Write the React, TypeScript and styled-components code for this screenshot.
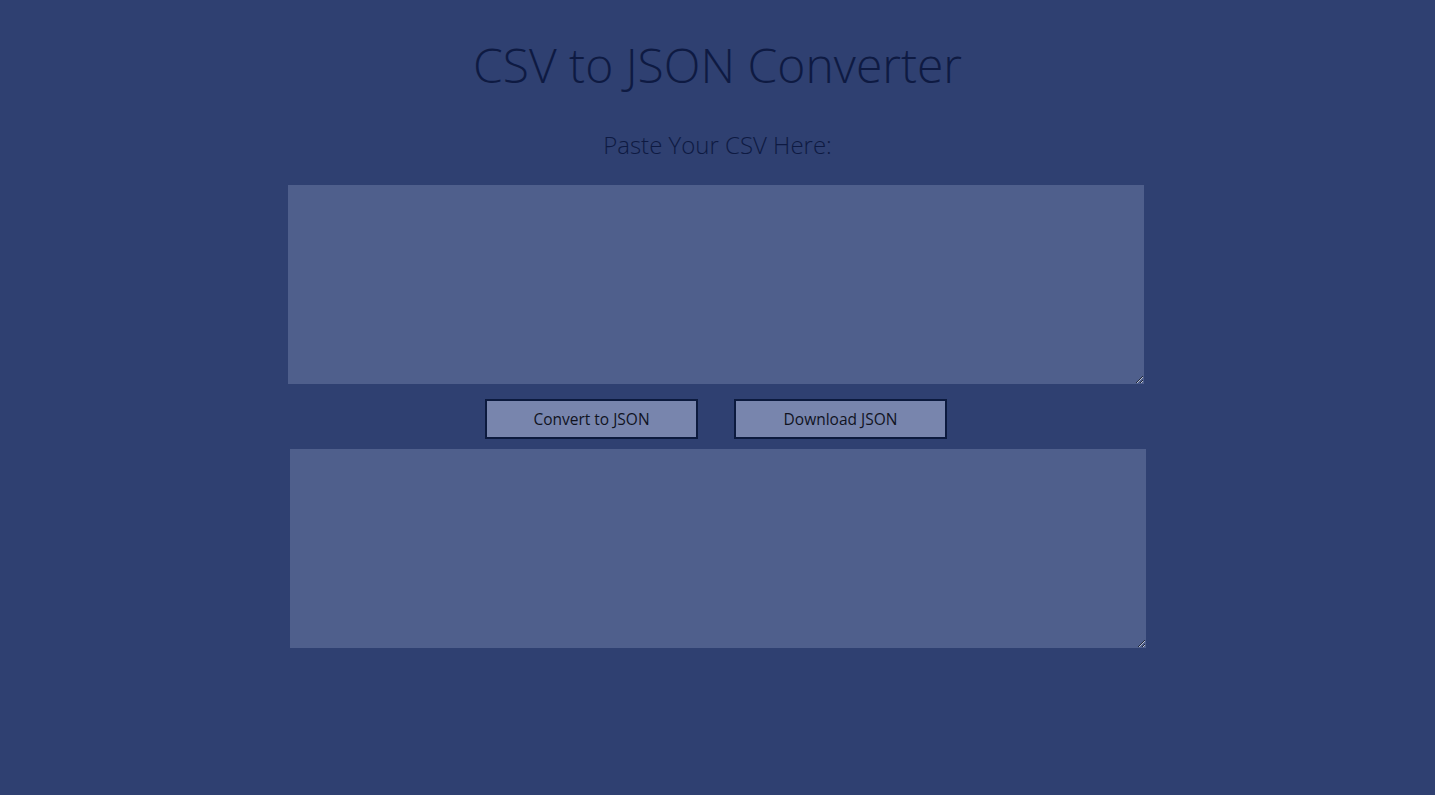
import React from "react";
import styled, { createGlobalStyle } from "styled-components";

const Global = createGlobalStyle`
  html, body {
    margin: 0;
    padding: 0;
    background: #2f4071;
    min-height: 100%;
  }
  body {
    font-family: "Open Sans", "Liberation Sans", sans-serif;
    color: #0f1b44;
  }
`;

const Page = styled.main`
  min-height: 795px;
  display: flex;
  flex-direction: column;
  align-items: center;
  padding-top: 32px;
  box-sizing: border-box;
  background: #2f4071;
`;

const Title = styled.h1`
  margin: 0;
  font-size: 48px;
  font-weight: 300;
  line-height: 65px;
  color: #0e1a42;
`;

const Subtitle = styled.h2`
  margin: 31px 0 0;
  font-size: 24px;
  font-weight: 300;
  line-height: 33px;
  color: #0e1a42;
`;

const Form = styled.section`
  align-self: stretch;
  display: flex;
  flex-direction: column;
  align-items: center;
  padding-right: 3px;
  margin-top: 24px;
`;

const Area = styled.textarea<{ $shift?: number; $top: number }>`
  display: block;
  box-sizing: border-box;
  width: 856px;
  height: 199px;
  margin: ${(p) => p.$top}px 0 0 ${(p) => p.$shift ?? 0}px;
  padding: 4px;
  border: none;
  outline: none;
  background: #4f5f8c;
  color: #0f1b44;
  font-family: "Open Sans", "Liberation Sans", sans-serif;
  font-size: 14px;
`;

const ButtonRow = styled.div`
  display: flex;
  gap: 36px;
  margin-top: 15px;
`;

const Button = styled.button`
  box-sizing: border-box;
  width: 213px;
  height: 40px;
  background: #7885ad;
  border: 2px solid #0c1a3e;
  color: #10131f;
  font-family: "Open Sans", "Liberation Sans", sans-serif;
  font-size: 15.5px;
  font-weight: 400;
  cursor: pointer;
  padding: 0;
`;

export default function App() {
  return (
    <>
      <Global />
      <Page>
        <Title>CSV to JSON Converter</Title>
        <Subtitle>Paste Your CSV Here:</Subtitle>
        <Form>
          <Area $top={0} />
          <ButtonRow>
            <Button>Convert to JSON</Button>
            <Button>Download JSON</Button>
          </ButtonRow>
          <Area $top={10} $shift={4} />
        </Form>
      </Page>
    </>
  );
}
